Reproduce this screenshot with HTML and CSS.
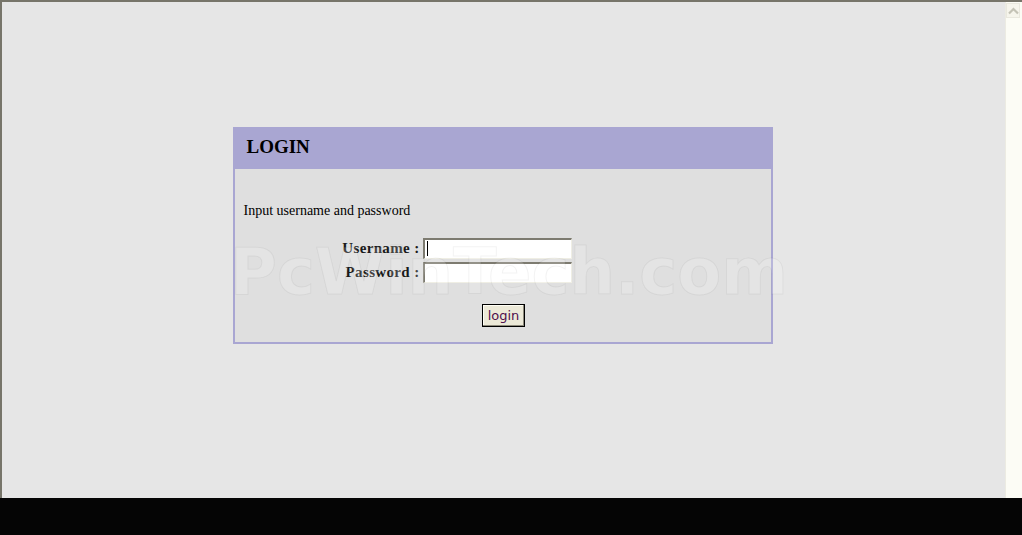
FILE: index.html
```html
<!DOCTYPE html>
<html>
<head>
<meta charset="utf-8">
<title>Login</title>
<link rel="stylesheet" href="styles.css">
</head>
<body>
<div class="screen">
  <div class="viewport">
    <div class="content">
      <div class="panel">
        <div class="panel-head"><h1 class="title">LOGIN</h1></div>
        <div class="panel-body">
          <p class="intro">Input username and password</p>
          <div class="form-grid">
            <label class="label" for="user">Username :</label>
            <input class="field field-focus" id="user" type="text">
            <label class="label" for="pass">Password :</label>
            <input class="field" id="pass" type="password">
          </div>
          <div class="actions"><button class="btn" type="button">login</button></div>
        </div>
      </div>
    </div>
    <div class="scrollbar">
      <div class="scroll-up">
        <svg width="11" height="8" viewBox="0 0 11 8"><path d="M1 6.5 L5.5 2 L10 6.5" fill="none" stroke="#c4c3b6" stroke-width="2.2"/></svg>
      </div>
    </div>
    <div class="watermark">PcWinTech.com</div>
  </div>
  <div class="taskbar"></div>
</div>
</body>
</html>
```

FILE: styles.css
```css
html, body {
  margin: 0;
  padding: 0;
}
body {
  width: 1022px;
  height: 535px;
  overflow: hidden;
  font-family: "Liberation Serif", "Times New Roman", serif;
}
.screen {
  display: flex;
  flex-direction: column;
  height: 535px;
}
.viewport {
  position: relative;
  height: 496px;
  display: flex;
  border-top: 2px solid #77756a;
  border-left: 2px solid #77756a;
  background: #e6e6e6;
}
.content {
  flex: 1;
  display: flex;
  justify-content: center;
  align-items: flex-start;
  padding-top: 125px;
  padding-right: 2px;
}
.scrollbar {
  width: 16px;
  background: #fcfcf5;
  border-left: 1px solid #ecebe2;
}
.scroll-up {
  width: 14px;
  height: 15px;
  margin: 1px 0 0 0;
  background: #f6f5ec;
  border: 1px solid #e9e8de;
  box-sizing: border-box;
  display: flex;
  align-items: center;
  justify-content: center;
}
.taskbar {
  flex: 1;
  background: #050505;
}
.panel {
  width: 540px;
  box-sizing: border-box;
  border: 2px solid #a9a6d2;
  background: #dfdfdf;
}
.panel-head {
  height: 40px;
  background: #a9a6d2;
  display: flex;
  align-items: center;
  padding-left: 12px;
}
.title {
  margin: 0;
  font-size: 19px;
  font-weight: bold;
  color: #000;
  padding-bottom: 4px;
}
.panel-body {
  padding: 34px 9px 15px 9px;
}
.intro {
  margin: 0;
  font-size: 14px;
  line-height: 16px;
  color: #000;
}
.form-grid {
  margin-top: 19px;
  display: grid;
  grid-template-columns: 175px 149px;
  column-gap: 4px;
  row-gap: 3px;
  align-items: center;
}
.label {
  text-align: right;
  font-size: 15px;
  font-weight: bold;
  letter-spacing: 0.35px;
  color: #1a1a1a;
  margin-right: -1px;
}
.field {
  width: 149px;
  height: 21px;
  box-sizing: border-box;
  margin: 0;
  padding: 0;
  border-style: solid;
  border-width: 2px 1px 1px 2px;
  border-color: #7d7b70 #efeee4 #efeee4 #7d7b70;
  background: #ffffff;
  outline: none;
}
.field-focus {
  background: linear-gradient(#000, #000) no-repeat 2px 1px / 1px 15px, #ffffff;
}
.actions {
  margin-top: 21px;
  padding-left: 2px;
  display: flex;
  justify-content: center;
}
.btn {
  width: 43px;
  height: 23px;
  box-sizing: border-box;
  margin: 0;
  padding: 0;
  background: #ece9d8;
  border: 1px solid #000;
  box-shadow: inset -1px -1px 0 #8d8a7c, inset 1px 1px 0 #fffef6;
  font-family: "DejaVu Sans", Verdana, sans-serif;
  font-size: 13px;
  color: #50104e;
}
.watermark {
  position: absolute;
  left: 228px;
  top: 238px;
  font-family: "DejaVu Sans", Verdana, sans-serif;
  font-weight: bold;
  font-size: 64px;
  line-height: 64px;
  white-space: nowrap;
  color: rgba(255, 255, 255, 0.18);
  -webkit-text-stroke: 1px rgba(0, 0, 0, 0.05);
  pointer-events: none;
}
```
